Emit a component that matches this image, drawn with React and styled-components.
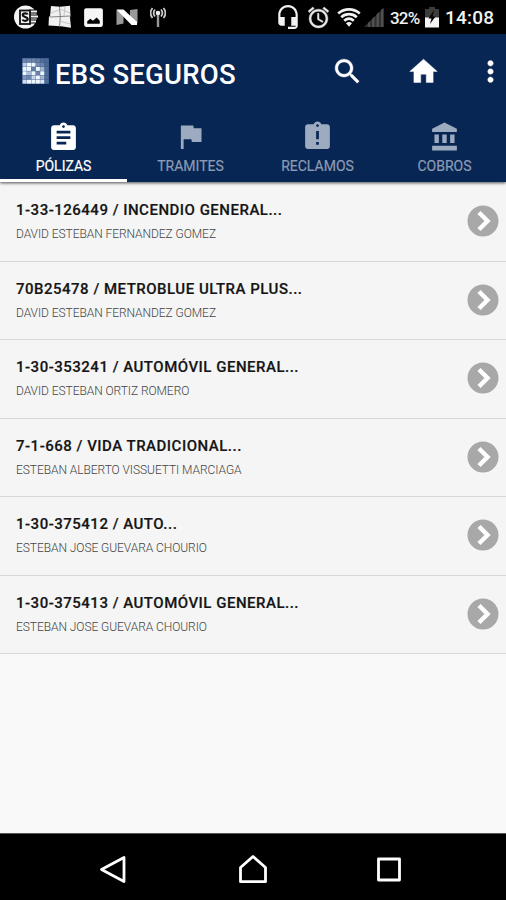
import React from 'react';
import styled, { createGlobalStyle } from 'styled-components';

const policies = [
    { title: '1-33-126449 / INCENDIO GENERAL...', owner: 'DAVID ESTEBAN FERNANDEZ GOMEZ' },
    { title: '70B25478 / METROBLUE ULTRA PLUS...', owner: 'DAVID ESTEBAN FERNANDEZ GOMEZ' },
    { title: '1-30-353241 / AUTOMÓVIL GENERAL...', owner: 'DAVID ESTEBAN ORTIZ ROMERO' },
    { title: '7-1-668 / VIDA TRADICIONAL...', owner: 'ESTEBAN ALBERTO VISSUETTI MARCIAGA' },
    { title: '1-30-375412 / AUTO...', owner: 'ESTEBAN JOSE GUEVARA CHOURIO' },
    { title: '1-30-375413 / AUTOMÓVIL GENERAL...', owner: 'ESTEBAN JOSE GUEVARA CHOURIO' },
];

const tabs = [
    {
        label: 'PÓLIZAS',
        gap: 4,
        path: 'M19 3h-4.18C14.4 1.84 13.3 1 12 1c-1.3 0-2.4.84-2.82 2H5c-1.1 0-2 .9-2 2v14c0 1.1.9 2 2 2h14c1.1 0 2-.9 2-2V5c0-1.1-.9-2-2-2zm-7 0c.55 0 1 .45 1 1s-.45 1-1 1-1-.45-1-1 .45-1 1-1zm2 14H7v-2h7v2zm3-4H7v-2h10v2zm0-4H7V7h10v2z',
    },
    {
        label: 'TRAMITES',
        gap: 5.5,
        path: 'M14.4 6L14 4H5v17h2v-7h5.6l.4 2h7V6z',
    },
    {
        label: 'RECLAMOS',
        gap: 5.5,
        path: 'M19 3h-4.18C14.4 1.84 13.3 1 12 1c-1.3 0-2.4.84-2.82 2H5c-1.1 0-2 .9-2 2v14c0 1.1.9 2 2 2h14c1.1 0 2-.9 2-2V5c0-1.1-.9-2-2-2zm-6 15h-2v-2h2v2zm0-4h-2V8h2v6zm-1-9c-.55 0-1-.45-1-1s.45-1 1-1 1 .45 1 1-.45 1-1 1z',
    },
    {
        label: 'COBROS',
        gap: 4.5,
        path: 'M12 1L3 5.600V8h18V5.600zM4.700 9.800h3.200v6.200H4.700zM10.400 9.800h3.200v6.200h-3.200zM16.100 9.800h3.200v6.200h-3.200zM3 18h18v3.400H3z',
    },
];

// brightness of the logo tiles, row by row
const logoTiles = [
    [0.3, 0.3, 0.3, 0.25, 0.15, 0.12],
    [0.75, 1, 1, 0.35, 0.3, 0.12],
    [1, 1, 0.25, 1, 0.6, 0.15],
    [1, 0.65, 1, 0.3, 1, 0.15],
    [0.4, 0.3, 0.8, 1, 0.6, 0.15],
    [0.85, 1, 1, 1, 0.9, 0.15],
];

const Logo = () => (
    <LogoSvg viewBox='0 0 27 26'>
        <rect width='27' height='26' rx='1' fill='#49699c' fillOpacity='.7' />
        {logoTiles.map((row, y) =>
            row.map((o, x) => (
                <rect key={`${x}-${y}`} x={0.6 + x * 4.4} y={0.5 + y * 4.25} width='4.100' height='3.900' fill='#eef6ff' fillOpacity={o} />
            ))
        )}
    </LogoSvg>
);

const StatusIcons = () => (
    <>
        <StatusIcon $w={24} $left={14} viewBox='0 0 24 24'>
            <circle cx='11.500' cy='12' r='11.500' fill='#f4f4f4' />
            <path d='M15 6.500h9M15 11.500h9M15 16.500h9' stroke='#000' strokeWidth='4.200' />
            <path d='M16 6.500h7M16 11.500h8M16 16.500h6' stroke='#f4f4f4' strokeWidth='2' />
            <rect x='6' y='5.500' width='10' height='13.500' fill='#f4f4f4' stroke='#111' strokeWidth='1.800' />
            <path d='M13.700 9.500c-.5-1.500-5-1.800-5 .6 0 2.200 5 1.500 5 4 0 2.300-4.600 2.200-5.200.4' fill='none' stroke='#111' strokeWidth='2.200' />
        </StatusIcon>
        <StatusIcon $w={24} $left={10} viewBox='0 0 24 24'>
            <path d='M3 1l9 .8 10-1 .5 10-.5 1.500 1 10.500-10-1.500-12.500-.8.500-9h1z' fill='#f0f0f0' />
            <path d='M2 12l10-.5 10.500-.5M11.500 2l.8 10-.8 10' fill='none' stroke='#777' strokeWidth='.9' />
            <path d='M12 4l10 4M12 16l10 3M17 1l-1 10M3 8l8-3' stroke='#bbb' strokeWidth='.8' />
        </StatusIcon>
        <StatusIcon $w={25} $left={8.5} viewBox='0 0 24 24'>
            <path d='M21 19V5c0-1.100-.9-2-2-2H5c-1.100 0-2 .9-2 2v14c0 1.100.9 2 2 2h14c1.100 0 2-.9 2-2zM6 18v-2.500l3-2.300 2.500 1.800 3.500-3 3 3V18z' fill='#f6f6f6' />
        </StatusIcon>
        <StatusIcon $w={22} $left={10.5} viewBox='0 0 22 24'>
            <path d='M.5 5l7 1v12.500l-7 1.500zM14 5l7.500-1v14l-3 2-4.500-5z' fill='#999' />
            <path d='M.5 4.500H7.500L21 17V20h-5.500z' fill='#fff' />
        </StatusIcon>
        <StatusIcon $w={16} $left={11.500} viewBox='0 0 16 24'>
            <path d='M6.800 8h2.400v14H6.800z' fill='#999' />
            <circle cx='8' cy='8' r='2.300' fill='#eee' />
            <path d='M5 4.500c-1.600 2-1.600 5 0 7M11 4.500c1.600 2 1.600 5 0 7M2.500 3c-2.300 3-2.300 7 0 10M13.500 3c2.300 3 2.300 7 0 10' fill='none' stroke='#c8c8c8' strokeWidth='1.800' />
        </StatusIcon>
    </>
);

const App = () => {
    return (
        <Screen>
            <GlobalStyle />
            <StatusBar>
                <StatusIcons />
                <Spacer />
                <StatusIcon $w={26} viewBox='0 0 24 24'>
                    <path d='M12 1c-4.970 0-9 4.030-9 9v7c0 1.660 1.340 3 3 3h3v-8H5v-2c0-3.870 3.130-7 7-7s7 3.130 7 7v2h-4v8h4v1h-7v2h6c1.660 0 3-1.340 3-3V10c0-4.970-4.030-9-9-9z' fill='#f2f2f2' />
                </StatusIcon>
                <StatusIcon $w={25} $left={5} viewBox='0 0 24 24'>
                    <path d='M22 5.720l-4.600-3.860-1.290 1.530 4.600 3.860L22 5.720zM7.880 3.390L6.600 1.860 2 5.710l1.290 1.530 4.590-3.850zM12.500 8H11v6l4.750 2.850.75-1.230-4-2.370V8zM12 4c-4.970 0-9 4.030-9 9s4.020 9 9 9c4.970 0 9-4.030 9-9s-4.030-9-9-9zm0 16c-3.870 0-7-3.130-7-7s3.130-7 7-7 7 3.130 7 7-3.130 7-7 7z' fill='#e8e8e8' stroke='#e8e8e8' strokeWidth='.4' />
                </StatusIcon>
                <StatusIcon $w={24} $left={6} viewBox='0 0 24 24'>
                    <path d='M1.200 8.500c6.500-5.400 15.100-5.400 21.600 0M4.200 12.200c4.700-4 10.900-4 15.600 0M7.200 15.800c3-2.600 6.600-2.600 9.600 0' fill='none' stroke='#f2f2f2' strokeWidth='2.700' />
                    <path d='M9 18.200c2-1.600 4-1.600 6 0L12 21.800z' fill='#f2f2f2' />
                </StatusIcon>
                <StatusIcon $w={20} $left={3} viewBox='0 0 20 24'>
                    <path d='M0 22L19.500 3v19z' fill='#303030' />
                    <path d='M4 22v-4l2-2v6zM8 22v-8l2.500-2.500V22zM12.500 22V9.500L15 7v15zM17 22V5l2.500-2v19z' fill='#505050' />
                </StatusIcon>
                <Percent>32%</Percent>
                <StatusIcon $w={14} $left={4} viewBox='0 0 14 24'>
                    <path d='M0 4h4V2h6v2h4v9H0z' fill='#3c3c3c' />
                    <path d='M0 12.500h14v10H0z' fill='#f4f4f4' />
                    <path d='M9 5L3.500 13.500h3L5 19l5.500-7.500h-3z' fill='#000' />
                </StatusIcon>
                <Clock>14:08</Clock>
            </StatusBar>

            <Header>
                <Toolbar>
                    <Logo />
                    <h1>EBS SEGUROS</h1>
                    <Spacer />
                    <ToolIcon viewBox='0 0 24 24'>
                        <path d='M15.500 14h-.790l-.280-.270C15.410 12.590 16 11.110 16 9.500 16 5.910 13.090 3 9.500 3S3 5.910 3 9.500 5.910 16 9.500 16c1.610 0 3.090-.590 4.230-1.570l.270.280v.790l5 4.990L20.490 19l-4.990-5zm-6 0C7.010 14 5 11.990 5 9.500S7.010 5 9.500 5 14 7.010 14 9.500 11.990 14 9.500 14z' />
                    </ToolIcon>
                    <ToolIcon $left={43} viewBox='0 0 24 24'>
                        <path d='M10 20v-6h4v6h5v-8h3L12 3 2 12h3v8z' />
                    </ToolIcon>
                    <ToolIcon $left={34} viewBox='0 0 24 24'>
                        <path d='M12 8c1.100 0 2-.9 2-2s-.9-2-2-2-2 .9-2 2 .9 2 2 2zm0 2c-1.100 0-2 .9-2 2s.9 2 2 2 2-.9 2-2-.9-2-2-2zm0 6c-1.100 0-2 .9-2 2s.9 2 2 2 2-.9 2-2-.9-2-2-2z' />
                    </ToolIcon>
                </Toolbar>
                <Tabs>
                    {tabs.map((tab, i) => (
                        <Tab key={tab.label} $active={i === 0} $gap={tab.gap}>
                            <svg viewBox='0 0 24 24'>
                                <path d={tab.path} />
                            </svg>
                            <span>{tab.label}</span>
                        </Tab>
                    ))}
                </Tabs>
            </Header>

            <List>
                {policies.map((policy) => (
                    <Row key={policy.title}>
                        <div>
                            <Title>{policy.title}</Title>
                            <Owner>{policy.owner}</Owner>
                        </div>
                        <Arrow viewBox='0 0 32 32'>
                            <circle cx='16' cy='16' r='15.500' fill='#a8a8a8' />
                            <path d='M12 7.500l8.500 8.500L12 24.500' fill='none' stroke='#fff' strokeWidth='4.500' />
                        </Arrow>
                    </Row>
                ))}
            </List>

            <NavBar>
                <NavIcon viewBox='0 0 30 30'>
                    <path d='M26 2.500v24L3.500 14.500z' />
                </NavIcon>
                <NavIcon viewBox='0 0 30 30'>
                    <path d='M2.500 26.700V12.500L15 1.500l12.500 11v14.200z' />
                </NavIcon>
                <NavIcon viewBox='0 0 30 30'>
                    <rect x='4.500' y='4' width='21' height='21' />
                </NavIcon>
            </NavBar>
        </Screen>
    );
};

const GlobalStyle = createGlobalStyle`
    *{
        box-sizing: border-box;
    }
    body{
        margin: 0;
        background: #f9f9f9;
        font-family: Roboto, 'Liberation Sans', sans-serif;
    }
    h1, h2, p{
        margin: 0;
    }
    svg{
        display: block;
        flex-shrink: 0;
    }
`;

const Screen = styled.div`
    display: flex;
    flex-direction: column;
    width: 506px;
    height: 900px;
    overflow: hidden;
    background: #f9f9f9;
`;

const StatusBar = styled.div`
    display: flex;
    align-items: center;
    height: 34px;
    padding-right: 12px;
    background: #000;
    color: #f2f2f2;
    line-height: 34px;
`;

const StatusIcon = styled.svg`
    width: ${({ $w }) => $w}px;
    height: ${({ $w }) => Math.max($w, 24)}px;
    margin-left: ${({ $left }) => $left || 0}px;
`;

const Spacer = styled.div`
    flex: 1;
`;

const Percent = styled.span`
    width: 31px;
    margin-left: 6px;
    padding-top: 2px;
    font-size: 17px;
    font-weight: 500;
    letter-spacing: -0.8px;
`;

const Clock = styled.span`
    width: 49px;
    margin-left: 6px;
    padding-top: 2px;
    font-size: 19px;
    font-weight: 500;
    letter-spacing: 0.2px;
    white-space: nowrap;
`;

const Header = styled.header`
    position: relative;
    flex-shrink: 0;
    height: 148px;
    background: #082654;
    box-shadow: 0 1px 3px rgba(0, 0, 0, 0.7);
`;

const Toolbar = styled.div`
    display: flex;
    align-items: center;
    height: 76px;
    padding: 0 0 0 22px;
    color: #fff;
    h1{
        margin-left: 6px;
        padding-top: 5px;
        font-size: 27.5px;
        font-weight: 500;
        line-height: 32px;
        letter-spacing: 0.25px;
        white-space: nowrap;
    }
`;

const LogoSvg = styled.svg`
    width: 27px;
    height: 26px;
    margin-top: -2px;
`;

const ToolIcon = styled.svg`
    width: 33px;
    height: 33px;
    margin-top: -1px;
    margin-left: ${({ $left }) => $left || 0}px;
    fill: #fff;
    stroke: #fff;
    stroke-width: 0.3;
    &:last-child{
        margin-right: -1px;
    }
`;

const Tabs = styled.nav`
    display: grid;
    grid-template-columns: repeat(4, 127px);
    height: 72px;
`;

const Tab = styled.div`
    display: flex;
    flex-direction: column;
    align-items: center;
    justify-content: flex-end;
    color: ${({ $active }) => ($active ? '#fff' : '#8c9bb3')};
    border-bottom: 3px solid ${({ $active }) => ($active ? '#fff' : 'transparent')};
    svg{
        width: 33px;
        height: 33px;
        margin-bottom: ${({ $gap }) => $gap}px;
        fill: ${({ $active }) => ($active ? '#fff' : '#9dabc0')};
    }
    span{
        height: 21px;
        font-size: 14px;
        line-height: 16px;
        -webkit-text-stroke: 0.2px currentColor;
    }
`;

const List = styled.main`
    flex: 1;
    padding-top: 1px;
`;

const Row = styled.article`
    display: flex;
    justify-content: space-between;
    height: 78.5px;
    padding: 17px 7px 0 16px;
    background: #f5f5f5;
    border-bottom: 1px solid #d8d8d8;
`;

const Title = styled.h2`
    font-size: 15px;
    font-weight: 500;
    line-height: 20px;
    letter-spacing: 0.5px;
    color: #151515;
    -webkit-text-stroke: 0.2px currentColor;
`;

const Owner = styled.p`
    margin-top: 6px;
    font-size: 12px;
    font-weight: 300;
    line-height: 16px;
    letter-spacing: -0.06px;
    color: #444;
`;

const Arrow = styled.svg`
    width: 32px;
    height: 32px;
    margin-top: 5px;
`;

const NavBar = styled.footer`
    display: flex;
    flex-shrink: 0;
    align-items: center;
    justify-content: space-between;
    height: 67px;
    padding: 5px 102px 0;
    background: #000;
    border-top: 1px solid #555;
    svg:first-child{
        margin-left: -4px;
        margin-right: 4px;
    }
`;

const NavIcon = styled.svg`
    width: 30px;
    height: 30px;
    fill: none;
    stroke: #fff;
    stroke-width: 2.8;
    stroke-linejoin: round;
`;

export default App;
